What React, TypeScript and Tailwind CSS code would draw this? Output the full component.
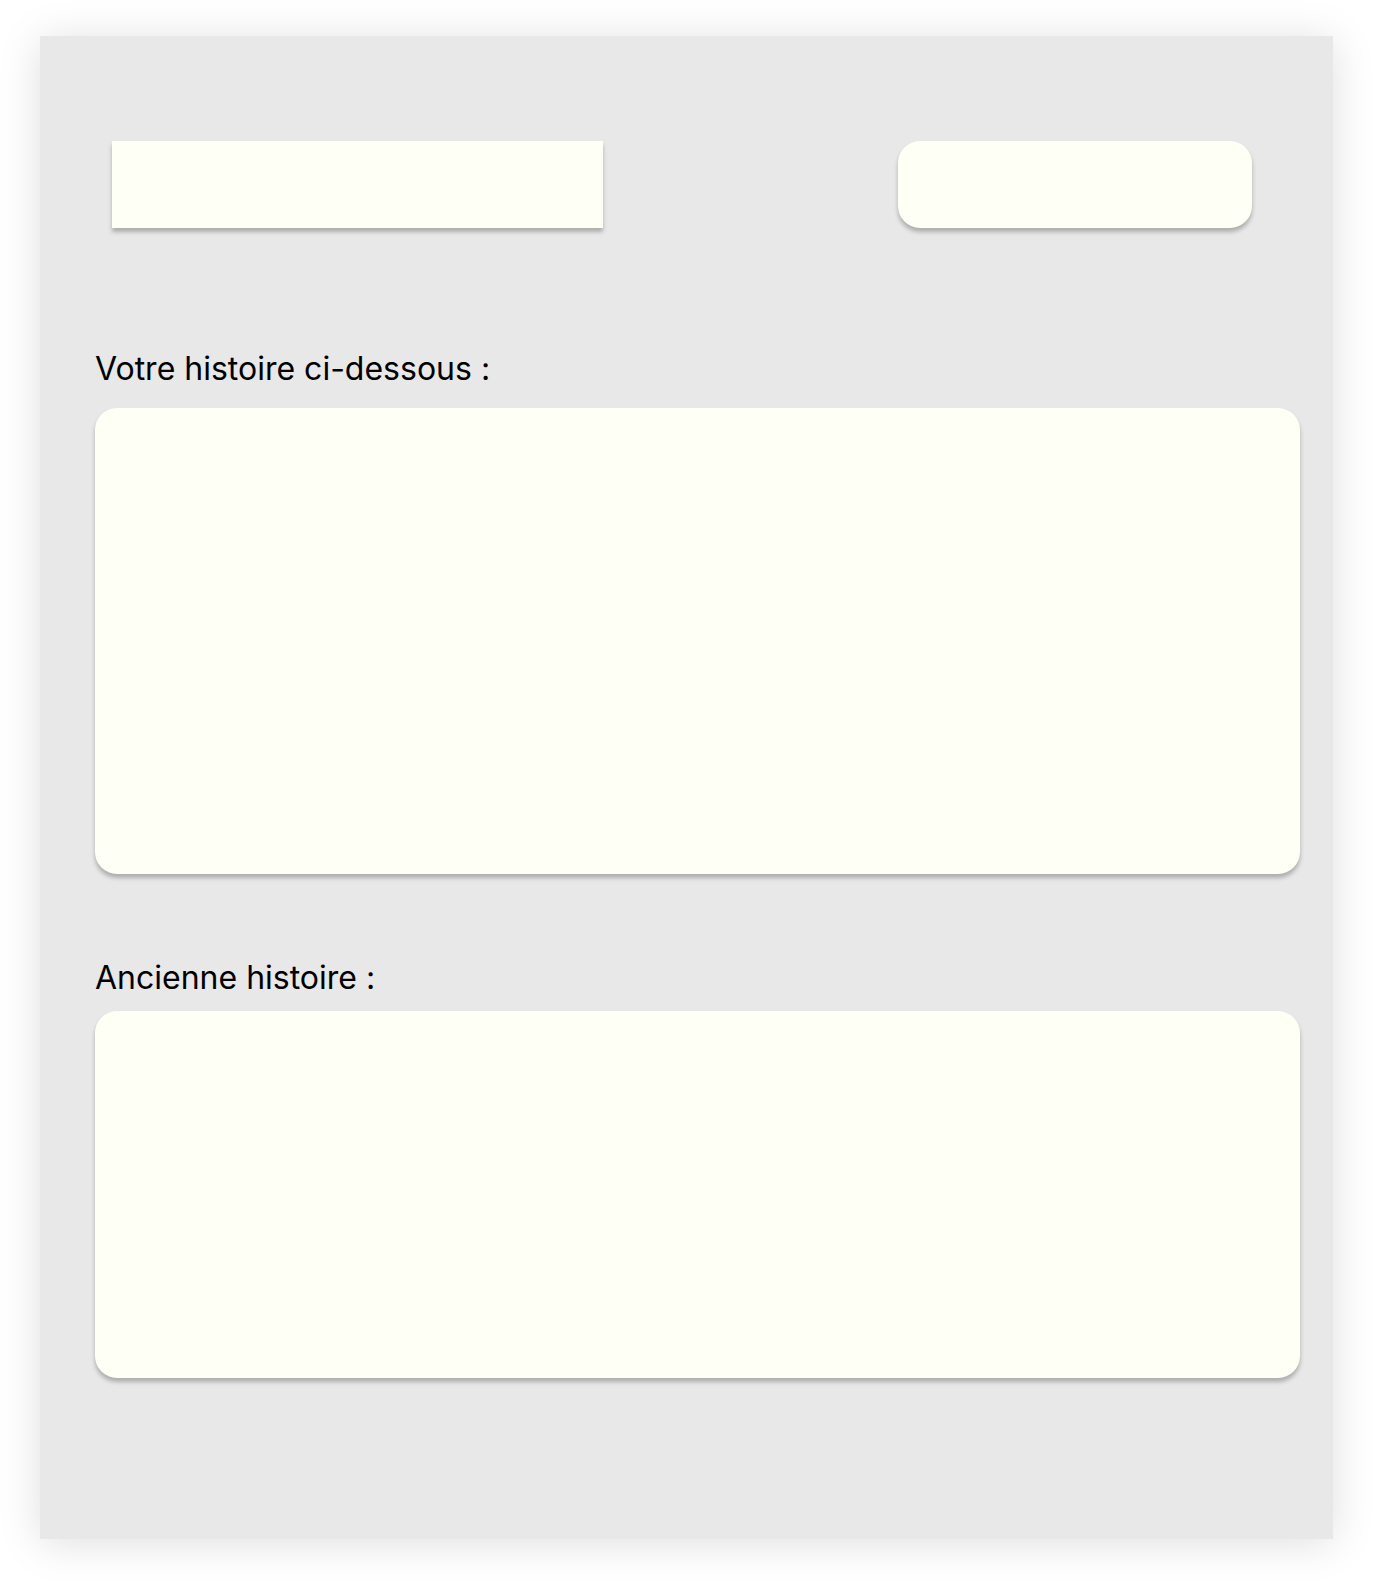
import React from 'react';

const App: React.FC = () => {
  return (
    <div className="min-h-screen bg-white pt-[36px] pl-[40px] font-['Inter','Liberation_Sans',sans-serif]">
      <div className="w-[1293px] h-[1503px] bg-[#e8e8e8] shadow-[0_4px_40px_rgba(0,0,0,0.13)] pt-[105px]">
        {/* top row */}
        <div className="flex justify-between pl-[72px] pr-[81px]">
          <div className="w-[491px] h-[87px] bg-[#fefff5] shadow-[0_4px_4px_rgba(0,0,0,0.25)]" />
          <div className="w-[354px] h-[87px] bg-[#fefff5] rounded-[22px] shadow-[0_4px_4px_rgba(0,0,0,0.25)]" />
        </div>

        <div className="pl-[55px] pr-[33px]">
          <label className="block mt-[123px] text-[32px] leading-[36px] text-black">
            Votre histoire ci-dessous :
          </label>
          <textarea className="block w-full mt-[21px] h-[466px] bg-[#fefff5] rounded-[22px] shadow-[0_4px_4px_rgba(0,0,0,0.25)] resize-none outline-none" />

          <label className="block mt-[86px] text-[32px] leading-[36px] text-black">
            Ancienne histoire :
          </label>
          <textarea className="block w-full mt-[15px] h-[367px] bg-[#fefff5] rounded-[22px] shadow-[0_4px_4px_rgba(0,0,0,0.25)] resize-none outline-none" />
        </div>
      </div>
    </div>
  );
};

export default App;
